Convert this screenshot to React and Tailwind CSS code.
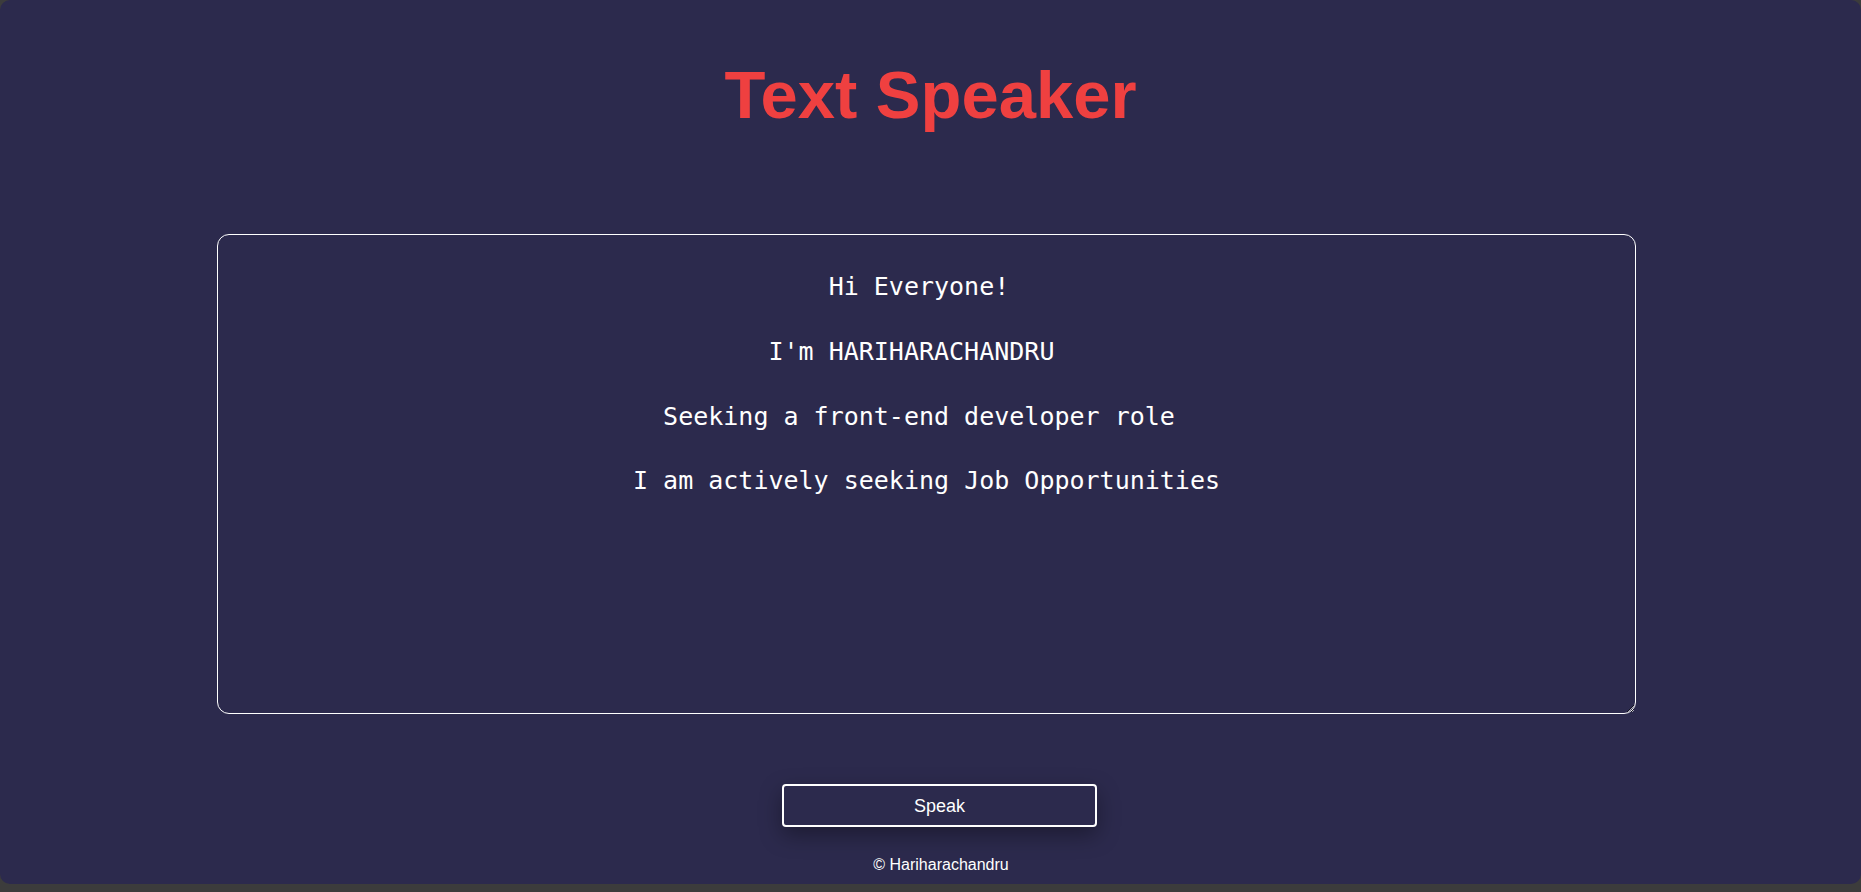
import { useState } from 'react';

const INITIAL = "Hi Everyone! \n\nI'm HARIHARACHANDRU  \n\nSeeking a front-end developer role \n\nI am actively seeking Job Opportunities";

export default function App() {
  const [text, setText] = useState(INITIAL);

  const speak = () => {
    if (typeof window !== 'undefined' && window.speechSynthesis) {
      window.speechSynthesis.speak(new SpeechSynthesisUtterance(text));
    }
  };

  return (
    <div className="h-[892px] bg-[#3c3c3c] overflow-hidden">
      <div className="h-[884px] rounded-[10px] bg-[#2c2a4d] flex flex-col" style={{ fontFamily: '"Liberation Sans", Arial, sans-serif' }}>
        {/* Title */}
        <h1 className="mt-[61px] text-center text-[67px] leading-none font-bold text-[#ef4040]">Text Speaker</h1>

        {/* Text area */}
        <textarea
          value={text}
          onChange={(e) => setText(e.target.value)}
          spellCheck={false}
          className="mt-[106px] ml-[217px] w-[1419px] h-[480px] rounded-[12px] border border-white bg-transparent text-white text-center text-[25px] leading-[32.4px] pt-[36px] px-4 outline-none"
          style={{ fontFamily: '"DejaVu Sans Mono", "Liberation Mono", monospace' }}
        />

        {/* Speak button */}
        <button
          onClick={speak}
          className="mt-[70px] ml-[782px] w-[315px] h-[43px] flex items-center justify-center rounded-[4px] border-2 border-white bg-[#2c2a4d] text-white text-[18px] leading-none shadow-[0_8px_22px_rgba(0,0,0,0.35)]"
        >
          Speak
        </button>

        {/* Footer */}
        <p className="mt-[30px] pl-[21px] text-center text-white text-[16px] leading-none">© Hariharachandru</p>
      </div>
    </div>
  );
}
